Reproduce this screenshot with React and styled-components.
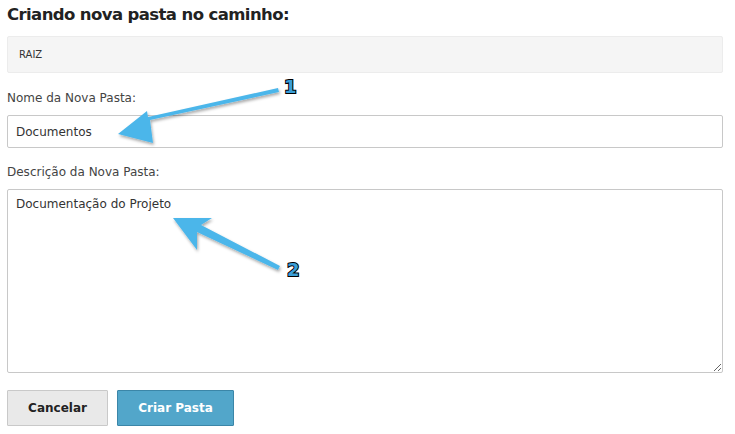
import React from "react";
import styled, { createGlobalStyle } from "styled-components";

const GlobalStyle = createGlobalStyle`
  html, body {
    margin: 0;
    padding: 0;
    background: #fff;
  }
  body {
    font-family: "DejaVu Sans", Verdana, sans-serif;
    color: #333;
  }
`;

const Page = styled.div`
  position: relative;
  width: 716px;
  padding: 4px 7px 0 7px;
`;

const Title = styled.h2`
  margin: 0 0 10px 0;
  font-size: 16.5px;
  font-weight: bold;
  color: #222;
  line-height: 22px;
  letter-spacing: -0.6px;
`;

const PathBox = styled.div`
  height: 37px;
  box-sizing: border-box;
  background: #f5f5f5;
  border: 1px solid #ececec;
  border-radius: 2px;
  padding: 0 11px;
  display: flex;
  align-items: center;
  font-size: 10px;
  color: #333;
`;

const Field = styled.div`
  display: flex;
  flex-direction: column;
  margin-top: ${({ $top }) => $top}px;
`;

const Label = styled.label`
  font-size: 12px;
  color: #444;
  line-height: 16px;
  margin-bottom: 9px;
`;

const TextInput = styled.input`
  box-sizing: border-box;
  width: 100%;
  height: 33px;
  border: 1px solid #c8c8c8;
  border-radius: 2px;
  padding: 0 8px;
  font-family: inherit;
  font-size: 12px;
  color: #333;
  outline: none;
`;

const TextArea = styled.textarea`
  box-sizing: border-box;
  width: 100%;
  height: 184px;
  border: 1px solid #c8c8c8;
  border-radius: 2px;
  padding: 7px 8px;
  font-family: inherit;
  font-size: 12px;
  color: #333;
  outline: none;
  resize: vertical;
`;

const Actions = styled.div`
  display: flex;
  gap: 9px;
  margin-top: 17px;
`;

const Button = styled.button`
  height: 36px;
  box-sizing: border-box;
  border-radius: 1px;
  font-family: inherit;
  font-size: 12px;
  font-weight: bold;
  padding: 0;
  width: ${({ $w }) => $w}px;
  background: ${({ $primary }) => ($primary ? "#52a6ca" : "#e9e9e9")};
  border: 1px solid ${({ $primary }) => ($primary ? "#3b86a8" : "#c9c9c9")};
  color: ${({ $primary }) => ($primary ? "#fff" : "#222")};
`;

const Overlay = styled.svg`
  position: absolute;
  left: 0;
  top: 0;
  pointer-events: none;
`;

const Badge = styled.span`
  position: absolute;
  left: ${({ $x }) => $x}px;
  top: ${({ $y }) => $y}px;
  font-family: "DejaVu Sans", sans-serif;
  font-weight: bold;
  font-size: 18px;
  color: #3a9fd8;
  -webkit-text-stroke: 2px #000;
  paint-order: stroke fill;
  line-height: 1;
`;

const Arrows = () => (
  <Overlay width="735" height="434" viewBox="0 0 735 434">
    <defs>
      <filter id="sh" x="-20%" y="-20%" width="140%" height="160%">
        <feDropShadow dx="1" dy="2" stdDeviation="1.5" floodColor="#000" floodOpacity="0.35" />
      </filter>
    </defs>
    <g fill="#4cb6ea" filter="url(#sh)">
      <polygon points="278,88 279,92 150,120 153,143 118,134 147,111 148,117" />
      <polygon points="280,266 278,270 197,232 197,250 173,218 212,218 201,225" />
    </g>
  </Overlay>
);

const App = () => (
  <>
    <GlobalStyle />
    <Page>
      <Title>Criando nova pasta no caminho:</Title>
      <PathBox>RAIZ</PathBox>
      <Field $top={17}>
        <Label>Nome da Nova Pasta:</Label>
        <TextInput defaultValue="Documentos" />
      </Field>
      <Field $top={16}>
        <Label>Descrição da Nova Pasta:</Label>
        <TextArea defaultValue="Documentação do Projeto" />
      </Field>
      <Actions>
        <Button $w={101}>Cancelar</Button>
        <Button $w={117} $primary>Criar Pasta</Button>
      </Actions>
      <Arrows />
      <Badge $x={284} $y={78}>1</Badge>
      <Badge $x={287} $y={261}>2</Badge>
    </Page>
  </>
);

export default App;
